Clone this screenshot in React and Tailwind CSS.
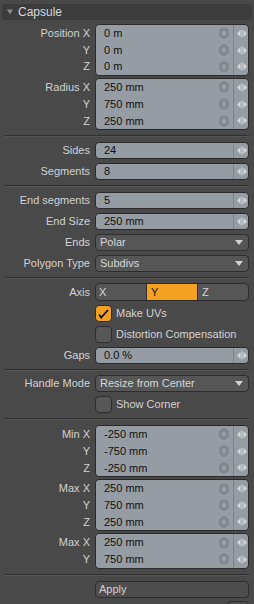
import React from "react";

const FONT = { fontFamily: '"Liberation Sans", Arial, sans-serif' };

const Arrows = () => (
  <svg width="10" height="9" viewBox="0 0 10 9">
    <polygon points="0,4.5 3.5,1 3.5,8" fill="#d4d7da" />
    <rect x="4.5" y="0.5" width="1" height="8" fill="#d4d7da" />
    <polygon points="6.5,1 10,4.5 6.5,8" fill="#d4d7da" />
  </svg>
);

const Key = () => (
  <svg width="12" height="12" viewBox="0 0 12 12">
    <ellipse cx="6" cy="6" rx="3.7" ry="4.3" fill="none" stroke="#80878e" strokeWidth="3" />
  </svg>
);

const Sep = ({ tight = false }) => (
  <div
    className={
      "shrink-0 mx-[5px] h-px bg-[#2f2f2f] shadow-[0_1px_0_#555] " +
      (tight ? "mt-[5px] mb-[5px]" : "mt-[5px] mb-[6px]")
    }
  />
);

const Label = ({ children, className = "" }) => (
  <div className={"w-[90px] shrink-0 text-right text-[11px] leading-none text-[#d2d2d2] " + className}>{children}</div>
);

function NumGroup({ labels, values, keys = true }) {
  return (
    <div className="flex items-stretch shrink-0">
      <div className="w-[90px] shrink-0 flex flex-col py-px">
        {labels.map((l, i) => (
          <div key={i} className="h-[16.7px] flex items-center justify-end text-[11px] text-[#d2d2d2]">{l}</div>
        ))}
      </div>
      <div className="ml-[5px] w-[154px] flex rounded-[4px] border border-[#2a2a2a] bg-[#959ca3]">
        <div className="flex-1 flex flex-col">
          {values.map((v, i) => (
            <div key={i} className="h-[16.7px] flex items-center pl-[8px] pr-[3px] text-[11px] text-[#111]">
              <span className="flex-1">{v}</span>
              {keys && <Key />}
            </div>
          ))}
        </div>
        <div className="w-[15px] border-l border-[#7b838a] flex flex-col">
          {values.map((v, i) => (
            <div key={i} className="h-[16.7px] flex items-center justify-center pl-px">
              <Arrows />
            </div>
          ))}
        </div>
      </div>
    </div>
  );
}

function NumField({ label, value }) {
  return (
    <div className="flex items-center h-[17px] shrink-0">
      <Label>{label}</Label>
      <div className="ml-[5px] w-[154px] h-full flex rounded-[4px] border border-[#2a2a2a] bg-[#959ca3]">
        <div className="flex-1 flex items-center pl-[8px] text-[11px] text-[#111]">{value}</div>
        <div className="w-[15px] border-l border-[#7b838a] flex items-center justify-center pl-px">
          <Arrows />
        </div>
      </div>
    </div>
  );
}

function Dropdown({ label, value }) {
  return (
    <div className="flex items-center h-[17px] shrink-0">
      <Label>{label}</Label>
      <div className="ml-[5px] w-[154px] h-full flex items-center rounded-[4px] border border-[#2d2d2d] bg-[#565656] pl-[4px] pr-[5px]">
        <span className="flex-1 text-[11px] text-[#d6d6d6]">{value}</span>
        <svg width="8" height="5" viewBox="0 0 8 5">
          <polygon points="0,0 8,0 4,5" fill="#d0d0d0" />
        </svg>
      </div>
    </div>
  );
}

function Check({ label, checked }) {
  return (
    <div className="flex items-center h-[17px] shrink-0">
      <div className="w-[95px] shrink-0" />
      <div
        className={
          "w-[17px] h-[17px] rounded-[4px] border border-[#2d2d2d] flex items-center justify-center " +
          (checked ? "bg-[#f2a023]" : "bg-[#575757]")
        }
      >
        {checked && (
          <svg width="11" height="10" viewBox="0 0 11 10">
            <path d="M1 5.5 L3.2 8.5 L10 1" fill="none" stroke="#111" strokeWidth="1.8" />
          </svg>
        )}
      </div>
      <span className="ml-[4px] text-[11px] text-[#d2d2d2]">{label}</span>
    </div>
  );
}

export default function App() {
  return (
    <div className="w-[254px] h-[604px] overflow-hidden bg-[#494949] flex flex-col" style={FONT}>
      <div className="mt-[4px] mx-[2px] h-[16px] shrink-0 rounded-[4px] bg-[#3c3c3c] flex items-center pl-[5px]">
        <svg width="6" height="6" viewBox="0 0 6 6">
          <polygon points="0,0.5 6,0.5 3,5.5" fill="#8c8c8c" />
        </svg>
        <span className="ml-[5px] text-[12px] text-[#d8d8d8]">Capsule</span>
      </div>

      <div className="mt-[4px] flex flex-col gap-[2px] shrink-0">
        <NumGroup labels={["Position X", "Y", "Z"]} values={["0 m", "0 m", "0 m"]} />
        <NumGroup labels={["Radius X", "Y", "Z"]} values={["250 mm", "750 mm", "250 mm"]} />
      </div>

      <Sep />

      <div className="flex flex-col gap-[4px] shrink-0">
        <NumField label="Sides" value="24" />
        <NumField label="Segments" value="8" />
      </div>

      <Sep />

      <div className="flex flex-col gap-[4px] shrink-0">
        <NumField label="End segments" value="5" />
        <NumField label="End Size" value="250 mm" />
        <Dropdown label="Ends" value="Polar" />
        <Dropdown label="Polygon Type" value="Subdivs" />
      </div>

      <Sep tight />

      <div className="flex flex-col gap-[4px] shrink-0">
        <div className="flex items-center h-[18px] shrink-0">
          <Label>Axis</Label>
          <div className="ml-[5px] w-[154px] h-full flex rounded-[4px] border border-[#2d2d2d] bg-[#565656] overflow-hidden text-[11px]">
            <div className="w-[50px] flex items-center pl-[3px] text-[#d6d6d6]">X</div>
            <div className="w-[52px] flex items-center pl-[4px] bg-[#f4a020] border-x border-[#2d2d2d] text-[#111]">Y</div>
            <div className="flex-1 flex items-center pl-[4px] text-[#d6d6d6]">Z</div>
          </div>
        </div>
        <Check label="Make UVs" checked />
        <Check label="Distortion Compensation" />
        <NumField label="Gaps" value="0.0 %" />
      </div>

      <Sep tight />

      <div className="flex flex-col gap-[4px] shrink-0">
        <Dropdown label="Handle Mode" value="Resize from Center" />
        <Check label="Show Corner" />
      </div>

      <Sep />

      <div className="flex flex-col gap-[2px] shrink-0">
        <NumGroup labels={["Min X", "Y", "Z"]} values={["-250 mm", "-750 mm", "-250 mm"]} />
        <NumGroup labels={["Max X", "Y", "Z"]} values={["250 mm", "750 mm", "250 mm"]} />
        <NumGroup labels={["Max X", "Y"]} values={["250 mm", "750 mm"]} />
      </div>

      <Sep />

      <div className="flex items-center h-[17px] shrink-0">
        <div className="w-[95px] shrink-0" />
        <div className="w-[154px] h-full flex items-center rounded-[4px] border border-[#2d2d2d] bg-[#4e4e4e] pl-[3px] text-[11px] text-[#d0d0d0]">
          Apply
        </div>
      </div>
      <div className="mt-[3px] flex justify-end pr-[5px] shrink-0">
        <div className="w-[22px] h-[10px] rounded-[4px] border border-[#2d2d2d] bg-[#4e4e4e]" />
      </div>
    </div>
  );
}
